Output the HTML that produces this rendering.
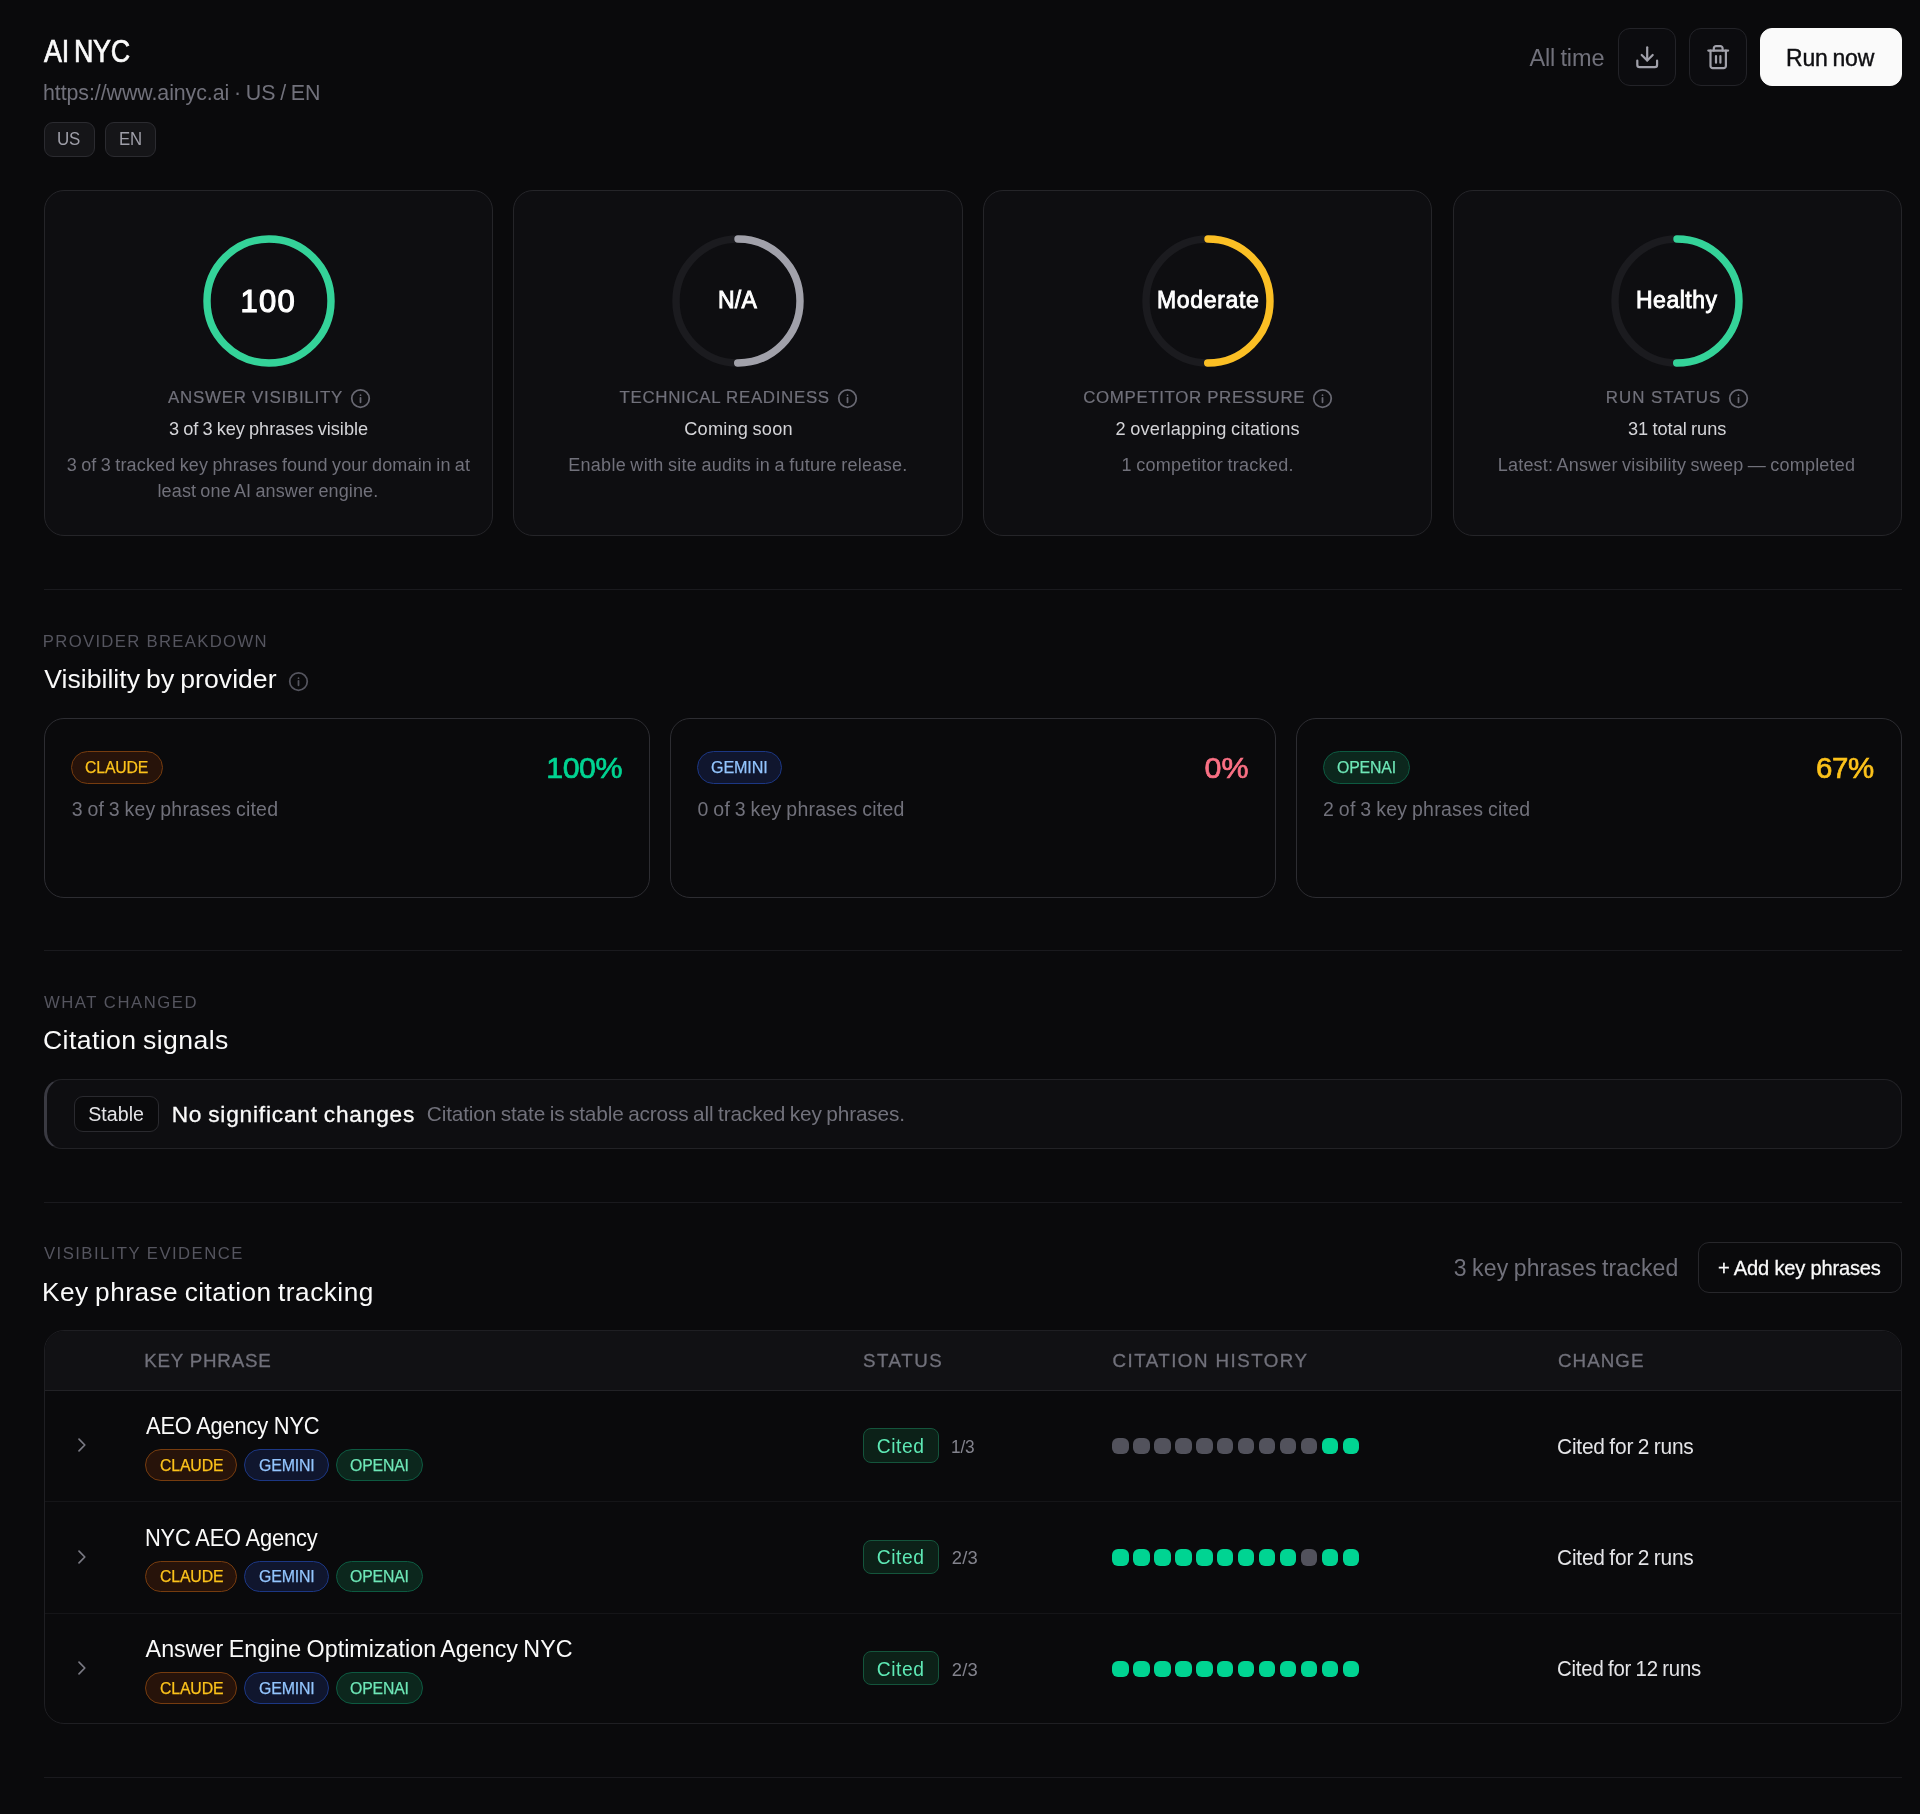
<!DOCTYPE html>
<html lang="en"><head><meta charset="utf-8"><title>AI NYC</title>
<style>
html,body{margin:0;padding:0;background:#0a0a0c;}
body{width:1920px;height:1814px;position:relative;overflow:hidden;font-family:"Liberation Sans",Arial,sans-serif;}
.b{position:absolute;box-sizing:border-box;}
.t{position:absolute;white-space:pre;line-height:1;}
.tx{position:absolute;left:0;top:0;width:1920px;height:1814px;will-change:transform;}
</style></head><body>
<div class="b" style="left:43.5px;top:121.7px;width:51.50px;height:35.00px;border-radius:9px;background:#151518;border:1px solid #2b2b30;"></div>
<div class="b" style="left:105px;top:121.7px;width:50.80px;height:35.00px;border-radius:9px;background:#151518;border:1px solid #2b2b30;"></div>
<div class="b" style="left:1618px;top:28.2px;width:57.80px;height:57.80px;border-radius:12px;background:#0c0c0f;border:1px solid #232328;"></div>
<div class="b" style="left:1689px;top:28.2px;width:57.80px;height:57.80px;border-radius:12px;background:#0c0c0f;border:1px solid #232328;"></div>
<div class="b" style="left:1760px;top:28.2px;width:142.40px;height:57.80px;border-radius:12px;background:#fafafa;border:1px solid #fafafa;"></div>
<svg class="b" style="left:1633.8px;top:44.3px" width="26.4" height="26.4" viewBox="0 0 24 24" fill="none" stroke="#a1a1aa" stroke-width="2" stroke-linecap="round" stroke-linejoin="round"><path d="M21 15v4a2 2 0 0 1-2 2H5a2 2 0 0 1-2-2v-4"/><polyline points="7 10 12 15 17 10"/><line x1="12" y1="15" x2="12" y2="3"/></svg>
<svg class="b" style="left:1704.7px;top:44.3px" width="26.4" height="26.4" viewBox="0 0 24 24" fill="none" stroke="#a1a1aa" stroke-width="2" stroke-linecap="round" stroke-linejoin="round"><path d="M3 6h18"/><path d="M19 6v14c0 1-1 2-2 2H7c-1 0-2-1-2-2V6"/><path d="M8 6V4c0-1 1-2 2-2h4c1 0 2 1 2 2v2"/><line x1="10" x2="10" y1="11" y2="17"/><line x1="14" x2="14" y1="11" y2="17"/></svg>
<div class="b" style="left:43.75px;top:190.3px;width:449.50px;height:346.00px;border-radius:20px;background:#0e0e11;border:1px solid #252529;"></div>
<svg class="b" style="left:198.50px;top:230.60px" width="140" height="140" viewBox="-70 -70 140 140" fill="none"><circle r="62" stroke="#1b1b1f" stroke-width="7.4"/><circle r="62" stroke="#34d399" stroke-width="7.4"/></svg>
<div class="b" style="left:513.25px;top:190.3px;width:449.25px;height:346.00px;border-radius:20px;background:#0e0e11;border:1px solid #252529;"></div>
<svg class="b" style="left:667.88px;top:230.60px" width="140" height="140" viewBox="-70 -70 140 140" fill="none"><circle r="62" stroke="#1b1b1f" stroke-width="7.4"/><circle r="62" stroke="#a1a1aa" stroke-width="7.4" stroke-linecap="round" stroke-dasharray="194.78 389.56" transform="rotate(-90)"/></svg>
<div class="b" style="left:983px;top:190.3px;width:449.25px;height:346.00px;border-radius:20px;background:#0e0e11;border:1px solid #252529;"></div>
<svg class="b" style="left:1137.62px;top:230.60px" width="140" height="140" viewBox="-70 -70 140 140" fill="none"><circle r="62" stroke="#1b1b1f" stroke-width="7.4"/><circle r="62" stroke="#fbbf24" stroke-width="7.4" stroke-linecap="round" stroke-dasharray="194.78 389.56" transform="rotate(-90)"/></svg>
<div class="b" style="left:1452.5px;top:190.3px;width:449.50px;height:346.00px;border-radius:20px;background:#0e0e11;border:1px solid #252529;"></div>
<svg class="b" style="left:1607.25px;top:230.60px" width="140" height="140" viewBox="-70 -70 140 140" fill="none"><circle r="62" stroke="#1b1b1f" stroke-width="7.4"/><circle r="62" stroke="#34d399" stroke-width="7.4" stroke-linecap="round" stroke-dasharray="194.78 389.56" transform="rotate(-90)"/></svg>
<svg class="b" style="left:349.80px;top:387.50px" width="21" height="21" viewBox="0 0 24 24" fill="none" stroke="#696973" stroke-width="2" stroke-linecap="round" stroke-linejoin="round"><circle cx="12" cy="12" r="10"/><path d="M12 16.4v-5.2"/><path d="M12 8.2h.01"/></svg>
<svg class="b" style="left:837.10px;top:387.50px" width="21" height="21" viewBox="0 0 24 24" fill="none" stroke="#696973" stroke-width="2" stroke-linecap="round" stroke-linejoin="round"><circle cx="12" cy="12" r="10"/><path d="M12 16.4v-5.2"/><path d="M12 8.2h.01"/></svg>
<svg class="b" style="left:1312.10px;top:387.50px" width="21" height="21" viewBox="0 0 24 24" fill="none" stroke="#696973" stroke-width="2" stroke-linecap="round" stroke-linejoin="round"><circle cx="12" cy="12" r="10"/><path d="M12 16.4v-5.2"/><path d="M12 8.2h.01"/></svg>
<svg class="b" style="left:1727.80px;top:387.50px" width="21" height="21" viewBox="0 0 24 24" fill="none" stroke="#696973" stroke-width="2" stroke-linecap="round" stroke-linejoin="round"><circle cx="12" cy="12" r="10"/><path d="M12 16.4v-5.2"/><path d="M12 8.2h.01"/></svg>
<svg class="b" style="left:288.20px;top:670.90px" width="21" height="21" viewBox="0 0 24 24" fill="none" stroke="#55555f" stroke-width="2" stroke-linecap="round" stroke-linejoin="round"><circle cx="12" cy="12" r="10"/><path d="M12 16.4v-5.2"/><path d="M12 8.2h.01"/></svg>
<div class="b" style="left:44px;top:589.2px;width:1858px;height:1px;background:#1a1a1e"></div>
<div class="b" style="left:44px;top:949.6px;width:1858px;height:1px;background:#1a1a1e"></div>
<div class="b" style="left:44px;top:1201.6px;width:1858px;height:1px;background:#1a1a1e"></div>
<div class="b" style="left:44px;top:1776.5px;width:1858px;height:1px;background:#1a1a1e"></div>
<div class="b" style="left:43.7px;top:718px;width:606.10px;height:179.70px;border-radius:20px;background:#0a0a0c;border:1px solid #2d2d32;"></div>
<div class="b" style="left:669.8px;top:718px;width:606.00px;height:179.70px;border-radius:20px;background:#0a0a0c;border:1px solid #2d2d32;"></div>
<div class="b" style="left:1295.6px;top:718px;width:606.40px;height:179.70px;border-radius:20px;background:#0a0a0c;border:1px solid #2d2d32;"></div>
<div class="b" style="left:70.8px;top:750.8px;width:92.50px;height:32.90px;border-radius:20px;background:#27130a;border:1px solid #763c0f;"></div>
<div class="b" style="left:696.9px;top:750.8px;width:85.00px;height:32.90px;border-radius:20px;background:#10162e;border:1px solid #1c3784;"></div>
<div class="b" style="left:1323px;top:750.8px;width:87.00px;height:32.90px;border-radius:20px;background:#0c271d;border:1px solid #0d5a41;"></div>
<div class="b" style="left:43.5px;top:1079px;width:1858.50px;height:70.30px;border-radius:18px;background:#0e0e11;border:1px solid #222226;border-left:3px solid #3a3a42;"></div>
<div class="b" style="left:73.75px;top:1096.25px;width:85.00px;height:35.45px;border-radius:9px;background:#0a0a0c;border:1px solid #2a2a2f;"></div>
<div class="b" style="left:1698.25px;top:1241.75px;width:203.75px;height:51.25px;border-radius:11px;background:#0a0a0c;border:1px solid #27272b;"></div>
<div class="b" style="left:44px;top:1330px;width:1858px;height:394px;border-radius:20px;background:#0a0a0c;border:1px solid #1f1f23;overflow:hidden"><div style="height:59px;background:#111114;border-bottom:1px solid #222226"></div><div style="position:absolute;left:0;right:0;top:170px;height:1px;background:#151518"></div><div style="position:absolute;left:0;right:0;top:281.5px;height:1px;background:#151518"></div></div>
<svg class="b" style="left:74px;top:1435.40px" width="16" height="20" viewBox="-8 -10 16 20" fill="none" stroke="#7a7a84" stroke-width="1.7" stroke-linecap="round" stroke-linejoin="round"><polyline points="-3,-5.8 2.8,0 -3,5.8"/></svg>
<div class="b" style="left:145.2px;top:1449.2px;width:92.10px;height:31.80px;border-radius:20px;background:#27130a;border:1px solid #763c0f;"></div>
<div class="b" style="left:244.2px;top:1449.2px;width:85.20px;height:31.80px;border-radius:20px;background:#10162e;border:1px solid #1c3784;"></div>
<div class="b" style="left:336.25px;top:1449.2px;width:86.75px;height:31.80px;border-radius:20px;background:#0c271d;border:1px solid #0d5a41;"></div>
<div class="b" style="left:863px;top:1428.25px;width:76.00px;height:34.35px;border-radius:8px;background:#0c2118;border:1px solid #14553c;"></div>
<div class="b" style="left:1112.40px;top:1438.00px;width:16.4px;height:16.3px;border-radius:6px;background:#52525c"></div>
<div class="b" style="left:1133.33px;top:1438.00px;width:16.4px;height:16.3px;border-radius:6px;background:#52525c"></div>
<div class="b" style="left:1154.26px;top:1438.00px;width:16.4px;height:16.3px;border-radius:6px;background:#52525c"></div>
<div class="b" style="left:1175.19px;top:1438.00px;width:16.4px;height:16.3px;border-radius:6px;background:#52525c"></div>
<div class="b" style="left:1196.12px;top:1438.00px;width:16.4px;height:16.3px;border-radius:6px;background:#52525c"></div>
<div class="b" style="left:1217.05px;top:1438.00px;width:16.4px;height:16.3px;border-radius:6px;background:#52525c"></div>
<div class="b" style="left:1237.98px;top:1438.00px;width:16.4px;height:16.3px;border-radius:6px;background:#52525c"></div>
<div class="b" style="left:1258.91px;top:1438.00px;width:16.4px;height:16.3px;border-radius:6px;background:#52525c"></div>
<div class="b" style="left:1279.84px;top:1438.00px;width:16.4px;height:16.3px;border-radius:6px;background:#52525c"></div>
<div class="b" style="left:1300.77px;top:1438.00px;width:16.4px;height:16.3px;border-radius:6px;background:#52525c"></div>
<div class="b" style="left:1321.70px;top:1438.00px;width:16.4px;height:16.3px;border-radius:6px;background:#00d492"></div>
<div class="b" style="left:1342.63px;top:1438.00px;width:16.4px;height:16.3px;border-radius:6px;background:#00d492"></div>
<svg class="b" style="left:74px;top:1546.70px" width="16" height="20" viewBox="-8 -10 16 20" fill="none" stroke="#7a7a84" stroke-width="1.7" stroke-linecap="round" stroke-linejoin="round"><polyline points="-3,-5.8 2.8,0 -3,5.8"/></svg>
<div class="b" style="left:145.2px;top:1560.5px;width:92.10px;height:31.80px;border-radius:20px;background:#27130a;border:1px solid #763c0f;"></div>
<div class="b" style="left:244.2px;top:1560.5px;width:85.20px;height:31.80px;border-radius:20px;background:#10162e;border:1px solid #1c3784;"></div>
<div class="b" style="left:336.25px;top:1560.5px;width:86.75px;height:31.80px;border-radius:20px;background:#0c271d;border:1px solid #0d5a41;"></div>
<div class="b" style="left:863px;top:1539.55px;width:76.00px;height:34.35px;border-radius:8px;background:#0c2118;border:1px solid #14553c;"></div>
<div class="b" style="left:1112.40px;top:1549.30px;width:16.4px;height:16.3px;border-radius:6px;background:#00d492"></div>
<div class="b" style="left:1133.33px;top:1549.30px;width:16.4px;height:16.3px;border-radius:6px;background:#00d492"></div>
<div class="b" style="left:1154.26px;top:1549.30px;width:16.4px;height:16.3px;border-radius:6px;background:#00d492"></div>
<div class="b" style="left:1175.19px;top:1549.30px;width:16.4px;height:16.3px;border-radius:6px;background:#00d492"></div>
<div class="b" style="left:1196.12px;top:1549.30px;width:16.4px;height:16.3px;border-radius:6px;background:#00d492"></div>
<div class="b" style="left:1217.05px;top:1549.30px;width:16.4px;height:16.3px;border-radius:6px;background:#00d492"></div>
<div class="b" style="left:1237.98px;top:1549.30px;width:16.4px;height:16.3px;border-radius:6px;background:#00d492"></div>
<div class="b" style="left:1258.91px;top:1549.30px;width:16.4px;height:16.3px;border-radius:6px;background:#00d492"></div>
<div class="b" style="left:1279.84px;top:1549.30px;width:16.4px;height:16.3px;border-radius:6px;background:#00d492"></div>
<div class="b" style="left:1300.77px;top:1549.30px;width:16.4px;height:16.3px;border-radius:6px;background:#52525c"></div>
<div class="b" style="left:1321.70px;top:1549.30px;width:16.4px;height:16.3px;border-radius:6px;background:#00d492"></div>
<div class="b" style="left:1342.63px;top:1549.30px;width:16.4px;height:16.3px;border-radius:6px;background:#00d492"></div>
<svg class="b" style="left:74px;top:1658.00px" width="16" height="20" viewBox="-8 -10 16 20" fill="none" stroke="#7a7a84" stroke-width="1.7" stroke-linecap="round" stroke-linejoin="round"><polyline points="-3,-5.8 2.8,0 -3,5.8"/></svg>
<div class="b" style="left:145.2px;top:1671.8px;width:92.10px;height:31.80px;border-radius:20px;background:#27130a;border:1px solid #763c0f;"></div>
<div class="b" style="left:244.2px;top:1671.8px;width:85.20px;height:31.80px;border-radius:20px;background:#10162e;border:1px solid #1c3784;"></div>
<div class="b" style="left:336.25px;top:1671.8px;width:86.75px;height:31.80px;border-radius:20px;background:#0c271d;border:1px solid #0d5a41;"></div>
<div class="b" style="left:863px;top:1650.85px;width:76.00px;height:34.35px;border-radius:8px;background:#0c2118;border:1px solid #14553c;"></div>
<div class="b" style="left:1112.40px;top:1660.60px;width:16.4px;height:16.3px;border-radius:6px;background:#00d492"></div>
<div class="b" style="left:1133.33px;top:1660.60px;width:16.4px;height:16.3px;border-radius:6px;background:#00d492"></div>
<div class="b" style="left:1154.26px;top:1660.60px;width:16.4px;height:16.3px;border-radius:6px;background:#00d492"></div>
<div class="b" style="left:1175.19px;top:1660.60px;width:16.4px;height:16.3px;border-radius:6px;background:#00d492"></div>
<div class="b" style="left:1196.12px;top:1660.60px;width:16.4px;height:16.3px;border-radius:6px;background:#00d492"></div>
<div class="b" style="left:1217.05px;top:1660.60px;width:16.4px;height:16.3px;border-radius:6px;background:#00d492"></div>
<div class="b" style="left:1237.98px;top:1660.60px;width:16.4px;height:16.3px;border-radius:6px;background:#00d492"></div>
<div class="b" style="left:1258.91px;top:1660.60px;width:16.4px;height:16.3px;border-radius:6px;background:#00d492"></div>
<div class="b" style="left:1279.84px;top:1660.60px;width:16.4px;height:16.3px;border-radius:6px;background:#00d492"></div>
<div class="b" style="left:1300.77px;top:1660.60px;width:16.4px;height:16.3px;border-radius:6px;background:#00d492"></div>
<div class="b" style="left:1321.70px;top:1660.60px;width:16.4px;height:16.3px;border-radius:6px;background:#00d492"></div>
<div class="b" style="left:1342.63px;top:1660.60px;width:16.4px;height:16.3px;border-radius:6px;background:#00d492"></div>
<div class="tx">
<span class="t" style="left:44.20px;top:36.00px;font-size:31px;letter-spacing:-0.310px;color:#fafafa;word-spacing:-2.50px;transform:scaleX(0.8674);transform-origin:0 0;-webkit-text-stroke:0.7px #fafafa;">AI NYC</span>
<span class="t" style="left:43.00px;top:83.00px;font-size:21.4px;letter-spacing:-0.082px;color:#71717b;word-spacing:-1.07px;">https://www.ainyc.ai · US / EN</span>
<span class="t" style="left:57.05px;top:131.00px;font-size:17.9px;letter-spacing:-0.179px;color:#9f9fa9;transform:scaleX(0.9477);transform-origin:0 0;">US</span>
<span class="t" style="left:119.06px;top:131.00px;font-size:17.9px;letter-spacing:-0.179px;color:#9f9fa9;transform:scaleX(0.9361);transform-origin:0 0;">EN</span>
<span class="t" style="left:1529.40px;top:47.00px;font-size:23.5px;letter-spacing:-0.114px;color:#71717b;word-spacing:-1.18px;">All time</span>
<span class="t" style="left:1785.72px;top:47.00px;font-size:23.5px;letter-spacing:-0.235px;color:#0f0f12;word-spacing:-1.18px;transform:scaleX(0.9790);transform-origin:0 0;-webkit-text-stroke:0.4px #0f0f12;">Run now</span>
<span class="t" style="left:240.50px;top:286.00px;font-size:31px;letter-spacing:1.259px;color:#ffffff;-webkit-text-stroke:1.15px #ffffff;">100</span>
<span class="t" style="left:718.00px;top:289.00px;font-size:23px;letter-spacing:0.250px;color:#ffffff;-webkit-text-stroke:0.85px #ffffff;">N/A</span>
<span class="t" style="left:1157.00px;top:289.00px;font-size:23px;letter-spacing:0.661px;color:#ffffff;-webkit-text-stroke:0.85px #ffffff;">Moderate</span>
<span class="t" style="left:1636.00px;top:289.00px;font-size:23px;letter-spacing:0.503px;color:#ffffff;-webkit-text-stroke:0.85px #ffffff;">Healthy</span>
<span class="t" style="left:168.00px;top:390.00px;font-size:16.9px;letter-spacing:0.743px;color:#71717b;-webkit-text-stroke:0.2px #71717b;">ANSWER VISIBILITY</span>
<span class="t" style="left:619.50px;top:390.00px;font-size:16.9px;letter-spacing:0.679px;color:#71717b;-webkit-text-stroke:0.2px #71717b;">TECHNICAL READINESS</span>
<span class="t" style="left:1083.25px;top:390.00px;font-size:16.9px;letter-spacing:0.631px;color:#71717b;-webkit-text-stroke:0.2px #71717b;">COMPETITOR PRESSURE</span>
<span class="t" style="left:1605.75px;top:390.00px;font-size:16.9px;letter-spacing:1.012px;color:#71717b;-webkit-text-stroke:0.2px #71717b;">RUN STATUS</span>
<span class="t" style="left:169.00px;top:420.00px;font-size:18.2px;letter-spacing:-0.022px;color:#d4d4d8;word-spacing:-0.91px;">3 of 3 key phrases visible</span>
<span class="t" style="left:684.25px;top:420.00px;font-size:18.2px;letter-spacing:0.211px;color:#d4d4d8;word-spacing:-0.91px;">Coming soon</span>
<span class="t" style="left:1115.50px;top:420.00px;font-size:18.2px;letter-spacing:0.224px;color:#d4d4d8;word-spacing:-0.91px;">2 overlapping citations</span>
<span class="t" style="left:1628.00px;top:420.00px;font-size:18.2px;letter-spacing:0.006px;color:#d4d4d8;word-spacing:-0.91px;">31 total runs</span>
<span class="t" style="left:66.75px;top:456.00px;font-size:18px;letter-spacing:0.164px;color:#71717b;word-spacing:-0.90px;">3 of 3 tracked key phrases found your domain in at</span>
<span class="t" style="left:157.50px;top:482.00px;font-size:18px;letter-spacing:0.123px;color:#71717b;word-spacing:-0.90px;">least one AI answer engine.</span>
<span class="t" style="left:568.25px;top:456.00px;font-size:18px;letter-spacing:0.282px;color:#71717b;word-spacing:-0.90px;">Enable with site audits in a future release.</span>
<span class="t" style="left:1121.50px;top:456.00px;font-size:18px;letter-spacing:0.286px;color:#71717b;word-spacing:-0.90px;">1 competitor tracked.</span>
<span class="t" style="left:1497.75px;top:456.00px;font-size:18px;letter-spacing:0.205px;color:#71717b;word-spacing:-0.90px;">Latest: Answer visibility sweep — completed</span>
<span class="t" style="left:42.80px;top:634.00px;font-size:16.7px;letter-spacing:1.326px;color:#55555f;">PROVIDER BREAKDOWN</span>
<span class="t" style="left:44.20px;top:666.00px;font-size:26.6px;letter-spacing:0.024px;color:#fafafa;word-spacing:-1.33px;">Visibility by provider</span>
<span class="t" style="left:85.30px;top:759.00px;font-size:17.2px;letter-spacing:-0.172px;color:#fcc21b;transform:scaleX(0.9211);transform-origin:0 0;-webkit-text-stroke:0.25px #fcc21b;">CLAUDE</span>
<span class="t" style="left:710.80px;top:759.00px;font-size:17.2px;letter-spacing:-0.172px;color:#93c5fd;transform:scaleX(0.9398);transform-origin:0 0;-webkit-text-stroke:0.25px #93c5fd;">GEMINI</span>
<span class="t" style="left:1337.00px;top:759.00px;font-size:17.2px;letter-spacing:-0.172px;color:#6ee7b7;transform:scaleX(0.9224);transform-origin:0 0;-webkit-text-stroke:0.25px #6ee7b7;">OPENAI</span>
<span class="t" style="left:546.30px;top:752.00px;font-size:30.4px;letter-spacing:-0.502px;color:#00d492;-webkit-text-stroke:0.7px #00d492;">100%</span>
<span class="t" style="left:1204.40px;top:752.00px;font-size:30.4px;letter-spacing:0.198px;color:#fb7185;-webkit-text-stroke:0.7px #fb7185;">0%</span>
<span class="t" style="left:1816.13px;top:752.00px;font-size:30.4px;letter-spacing:-0.304px;color:#fcc21b;transform:scaleX(0.9674);transform-origin:0 0;-webkit-text-stroke:0.7px #fcc21b;">67%</span>
<span class="t" style="left:71.70px;top:800.00px;font-size:19.5px;letter-spacing:0.229px;color:#71717b;word-spacing:-0.98px;">3 of 3 key phrases cited</span>
<span class="t" style="left:697.50px;top:800.00px;font-size:19.5px;letter-spacing:0.251px;color:#71717b;word-spacing:-0.98px;">0 of 3 key phrases cited</span>
<span class="t" style="left:1323.00px;top:800.00px;font-size:19.5px;letter-spacing:0.268px;color:#71717b;word-spacing:-0.98px;">2 of 3 key phrases cited</span>
<span class="t" style="left:44.00px;top:995.00px;font-size:16.7px;letter-spacing:1.526px;color:#55555f;">WHAT CHANGED</span>
<span class="t" style="left:43.00px;top:1027.00px;font-size:26.6px;letter-spacing:0.419px;color:#fafafa;word-spacing:-1.33px;">Citation signals</span>
<span class="t" style="left:88.30px;top:1105.00px;font-size:19.6px;letter-spacing:0.008px;color:#e4e4e7;">Stable</span>
<span class="t" style="left:171.70px;top:1103.00px;font-size:22.7px;letter-spacing:0.793px;color:#fafafa;word-spacing:-1.14px;-webkit-text-stroke:0.3px #fafafa;">No significant changes</span>
<span class="t" style="left:426.80px;top:1104.00px;font-size:20.8px;letter-spacing:-0.148px;color:#71717b;word-spacing:-1.04px;">Citation state is stable across all tracked key phrases.</span>
<span class="t" style="left:44.00px;top:1246.00px;font-size:16.7px;letter-spacing:1.452px;color:#55555f;">VISIBILITY EVIDENCE</span>
<span class="t" style="left:42.00px;top:1279.00px;font-size:26.2px;letter-spacing:0.500px;color:#fafafa;word-spacing:-1.31px;">Key phrase citation tracking</span>
<span class="t" style="left:1453.75px;top:1257.00px;font-size:23px;letter-spacing:0.149px;color:#71717b;word-spacing:-1.15px;">3 key phrases tracked</span>
<span class="t" style="left:1717.80px;top:1257.00px;font-size:21.1px;letter-spacing:-0.211px;color:#fafafa;transform:scaleX(0.9538);transform-origin:0 0;-webkit-text-stroke:0.3px #fafafa;">+ Add key phrases</span>
<span class="t" style="left:144.20px;top:1352.00px;font-size:18.75px;letter-spacing:0.786px;color:#71717b;-webkit-text-stroke:0.3px #71717b;">KEY PHRASE</span>
<span class="t" style="left:863.00px;top:1352.00px;font-size:18.75px;letter-spacing:1.515px;color:#71717b;-webkit-text-stroke:0.3px #71717b;">STATUS</span>
<span class="t" style="left:1112.50px;top:1352.00px;font-size:18.75px;letter-spacing:1.461px;color:#71717b;-webkit-text-stroke:0.3px #71717b;">CITATION HISTORY</span>
<span class="t" style="left:1558.00px;top:1352.00px;font-size:18.75px;letter-spacing:1.058px;color:#71717b;-webkit-text-stroke:0.3px #71717b;">CHANGE</span>
<span class="t" style="left:145.60px;top:1415.00px;font-size:23.3px;letter-spacing:-0.233px;color:#fafafa;transform:scaleX(0.9396);transform-origin:0 0;">AEO Agency NYC</span>
<span class="t" style="left:159.60px;top:1457.00px;font-size:17.2px;letter-spacing:-0.172px;color:#fcc21b;transform:scaleX(0.9225);transform-origin:0 0;-webkit-text-stroke:0.25px #fcc21b;">CLAUDE</span>
<span class="t" style="left:258.75px;top:1457.00px;font-size:17.2px;letter-spacing:-0.172px;color:#93c5fd;transform:scaleX(0.9247);transform-origin:0 0;-webkit-text-stroke:0.25px #93c5fd;">GEMINI</span>
<span class="t" style="left:349.80px;top:1457.00px;font-size:17.2px;letter-spacing:-0.172px;color:#6ee7b7;transform:scaleX(0.9192);transform-origin:0 0;-webkit-text-stroke:0.25px #6ee7b7;">OPENAI</span>
<span class="t" style="left:876.75px;top:1437.00px;font-size:19.3px;letter-spacing:0.553px;color:#5ee9b5;">Cited</span>
<span class="t" style="left:950.81px;top:1438.00px;font-size:18.4px;letter-spacing:-0.184px;color:#83838d;transform:scaleX(0.9387);transform-origin:0 0;">1/3</span>
<span class="t" style="left:1556.53px;top:1436.00px;font-size:21.6px;letter-spacing:-0.216px;color:#e4e4e7;word-spacing:-1.08px;transform:scaleX(0.9690);transform-origin:0 0;">Cited for 2 runs</span>
<span class="t" style="left:144.66px;top:1527.00px;font-size:23.3px;letter-spacing:-0.233px;color:#fafafa;transform:scaleX(0.9409);transform-origin:0 0;">NYC AEO Agency</span>
<span class="t" style="left:159.60px;top:1568.00px;font-size:17.2px;letter-spacing:-0.172px;color:#fcc21b;transform:scaleX(0.9225);transform-origin:0 0;-webkit-text-stroke:0.25px #fcc21b;">CLAUDE</span>
<span class="t" style="left:258.75px;top:1568.00px;font-size:17.2px;letter-spacing:-0.172px;color:#93c5fd;transform:scaleX(0.9247);transform-origin:0 0;-webkit-text-stroke:0.25px #93c5fd;">GEMINI</span>
<span class="t" style="left:349.80px;top:1568.00px;font-size:17.2px;letter-spacing:-0.172px;color:#6ee7b7;transform:scaleX(0.9192);transform-origin:0 0;-webkit-text-stroke:0.25px #6ee7b7;">OPENAI</span>
<span class="t" style="left:876.75px;top:1548.00px;font-size:19.3px;letter-spacing:0.553px;color:#5ee9b5;">Cited</span>
<span class="t" style="left:951.75px;top:1549.00px;font-size:18.4px;letter-spacing:0.206px;color:#83838d;">2/3</span>
<span class="t" style="left:1556.53px;top:1547.00px;font-size:21.6px;letter-spacing:-0.216px;color:#e4e4e7;word-spacing:-1.08px;transform:scaleX(0.9690);transform-origin:0 0;">Cited for 2 runs</span>
<span class="t" style="left:145.60px;top:1638.00px;font-size:23.3px;letter-spacing:0.011px;color:#fafafa;word-spacing:-1.17px;">Answer Engine Optimization Agency NYC</span>
<span class="t" style="left:159.60px;top:1680.00px;font-size:17.2px;letter-spacing:-0.172px;color:#fcc21b;transform:scaleX(0.9225);transform-origin:0 0;-webkit-text-stroke:0.25px #fcc21b;">CLAUDE</span>
<span class="t" style="left:258.75px;top:1680.00px;font-size:17.2px;letter-spacing:-0.172px;color:#93c5fd;transform:scaleX(0.9247);transform-origin:0 0;-webkit-text-stroke:0.25px #93c5fd;">GEMINI</span>
<span class="t" style="left:349.80px;top:1680.00px;font-size:17.2px;letter-spacing:-0.172px;color:#6ee7b7;transform:scaleX(0.9192);transform-origin:0 0;-webkit-text-stroke:0.25px #6ee7b7;">OPENAI</span>
<span class="t" style="left:876.75px;top:1660.00px;font-size:19.3px;letter-spacing:0.553px;color:#5ee9b5;">Cited</span>
<span class="t" style="left:951.75px;top:1661.00px;font-size:18.4px;letter-spacing:0.206px;color:#83838d;">2/3</span>
<span class="t" style="left:1556.56px;top:1658.00px;font-size:21.6px;letter-spacing:-0.216px;color:#e4e4e7;word-spacing:-1.08px;transform:scaleX(0.9432);transform-origin:0 0;">Cited for 12 runs</span>
</div>
</body></html>
